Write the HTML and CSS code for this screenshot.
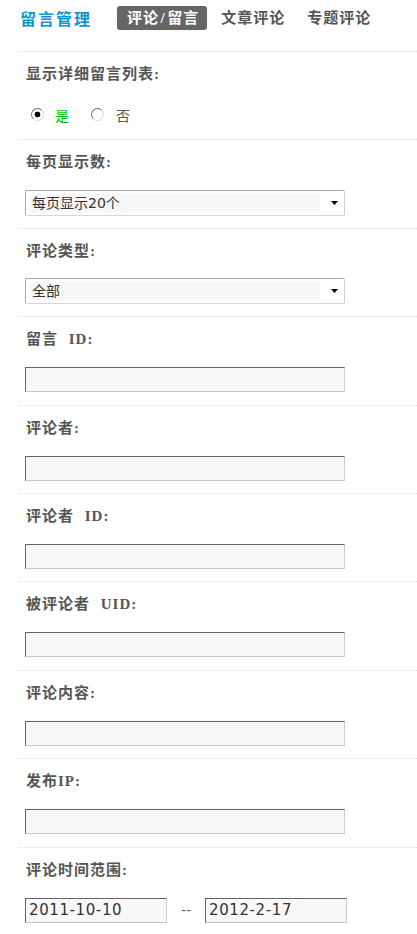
FILE: index.html
```html
<!DOCTYPE html>
<html lang="zh-CN">
<head>
<meta charset="utf-8">
<title>留言管理</title>
<link rel="stylesheet" href="styles.css">
</head>
<body>
<div class="page">
  <div class="header">
    <h1 class="title">留言管理</h1>
    <nav class="tabs">
      <a class="tab active">评论<span class="slash">/</span>留言</a>
      <a class="tab">文章评论</a>
      <a class="tab">专题评论</a>
    </nav>
  </div>

  <div class="section">
    <div class="label">显示详细留言列表:</div>
    <div class="control radios">
      <label class="radio yes"><input type="radio" name="detail" checked><span>是</span></label>
      <label class="radio no"><input type="radio" name="detail"><span>否</span></label>
    </div>
  </div>

  <div class="section">
    <div class="label">每页显示数:</div>
    <div class="control">
      <div class="select"><span class="select-value">每页显示20个</span><svg class="select-arrow" width="7" height="4" viewBox="0 0 7 4"><path d="M0 0H7L3.5 4Z" fill="#000"/></svg></div>
    </div>
  </div>

  <div class="section">
    <div class="label">评论类型:</div>
    <div class="control">
      <div class="select"><span class="select-value">全部</span><svg class="select-arrow" width="7" height="4" viewBox="0 0 7 4"><path d="M0 0H7L3.5 4Z" fill="#000"/></svg></div>
    </div>
  </div>

  <div class="section">
    <div class="label">留言 ID:</div>
    <div class="control"><input class="text" type="text"></div>
  </div>

  <div class="section">
    <div class="label">评论者:</div>
    <div class="control"><input class="text" type="text"></div>
  </div>

  <div class="section">
    <div class="label">评论者 ID:</div>
    <div class="control"><input class="text" type="text"></div>
  </div>

  <div class="section">
    <div class="label">被评论者 UID:</div>
    <div class="control"><input class="text" type="text"></div>
  </div>

  <div class="section">
    <div class="label">评论内容:</div>
    <div class="control"><input class="text" type="text"></div>
  </div>

  <div class="section">
    <div class="label">发布IP:</div>
    <div class="control"><input class="text" type="text"></div>
  </div>

  <div class="section">
    <div class="label">评论时间范围:</div>
    <div class="control dates">
      <input class="text date" type="text" value="2011-10-10">
      <span class="sep">--</span>
      <input class="text date" type="text" value="2012-2-17">
    </div>
  </div>
</div>
</body>
</html>
```
FILE: styles.css
```css
html, body {
  margin: 0;
  padding: 0;
  background: #fff;
}

body {
  font-family: "Noto Sans CJK SC", sans-serif;
  font-size: 14px;
  color: #555;
}

.page {
  margin-left: 18px;
}

.header {
  height: 51px;
  box-sizing: border-box;
  padding-top: 6px;
  display: flex;
  align-items: flex-start;
}

.title {
  margin: 0 0 0 2px;
  height: 24px;
  line-height: 24px;
  font-size: 16px;
  font-weight: 700;
  letter-spacing: 2px;
  color: #0c98cf;
}

.tabs {
  display: flex;
  gap: 4px;
  margin-left: 25px;
}

.tab {
  height: 24px;
  line-height: 24px;
  padding: 0 8px 0 10px;
  font-family: "Liberation Serif", "Noto Sans CJK SC", serif;
  font-size: 15px;
  font-weight: 700;
  letter-spacing: 1px;
  color: #555;
  border-radius: 3px;
}

.tab.active {
  background: #666;
  color: #fff;
}

.slash {
  margin: 0 1.5px;
}

.section {
  border-top: 1px dotted #d3e3ee;
  padding: 12px 0 11.9px 7px;
}

.label {
  height: 20px;
  line-height: 20px;
  padding-left: 1px;
  font-family: "Liberation Serif", "Noto Sans CJK SC", serif;
  font-size: 15px;
  font-weight: 700;
  letter-spacing: 1px;
  word-spacing: 6px;
  color: #555;
}

.control {
  margin-top: 17.5px;
  height: 26px;
  display: flex;
  align-items: center;
}

.radios {
  padding-left: 6px;
}

.radio {
  display: flex;
  align-items: center;
  font-size: 14px;
  line-height: 20px;
}

.radio input {
  appearance: none;
  -webkit-appearance: none;
  margin: 0;
  width: 13px;
  height: 13px;
  box-sizing: border-box;
  border-radius: 50%;
  border: 1px solid;
  border-color: #6f6f6f #d8d8d8 #d8d8d8 #6f6f6f;
  background: #fff;
}

.radio input:checked {
  background: radial-gradient(circle, #000 0 2.6px, #fff 3.2px);
}

.radio span {
  margin-left: 11px;
}

.radio.yes span {
  color: #00c800;
}

.radio.no {
  margin-left: 22px;
}

.radio.no span {
  margin-left: 12px;
  color: #555;
}

.select {
  width: 320px;
  height: 26px;
  box-sizing: border-box;
  border: 1px solid #a6a6a6;
  border-bottom-color: #d6d6d6;
  border-right-color: #cfcfcf;
  border-radius: 2px;
  display: flex;
  align-items: center;
  padding-left: 3px;
  background: #fff;
}

.select-value {
  width: 291px;
  height: 18px;
  line-height: 18px;
  box-sizing: border-box;
  padding-left: 3px;
  background: #f7f7f7;
  font-family: "DejaVu Sans", "Noto Sans CJK SC", sans-serif;
  font-size: 14px;
  color: #333;
}

.select-arrow {
  display: block;
  margin-left: 11px;
}

.text {
  margin: 0;
  width: 320px;
  height: 25px;
  box-sizing: border-box;
  border: 1px solid;
  border-color: #646464 #cccccc #c6c6c6 #646464;
  background: #f8f8f8;
  padding: 0 3px;
  outline: none;
  font-family: "DejaVu Sans", sans-serif;
  font-size: 15px;
  letter-spacing: 0.6px;
  color: #333;
}

.dates .date {
  width: 142px;
}

.sep {
  width: 14px;
  margin: 0 12px;
  font-family: "DejaVu Sans", sans-serif;
  font-size: 14px;
  color: #666;
  text-align: center;
}
```
